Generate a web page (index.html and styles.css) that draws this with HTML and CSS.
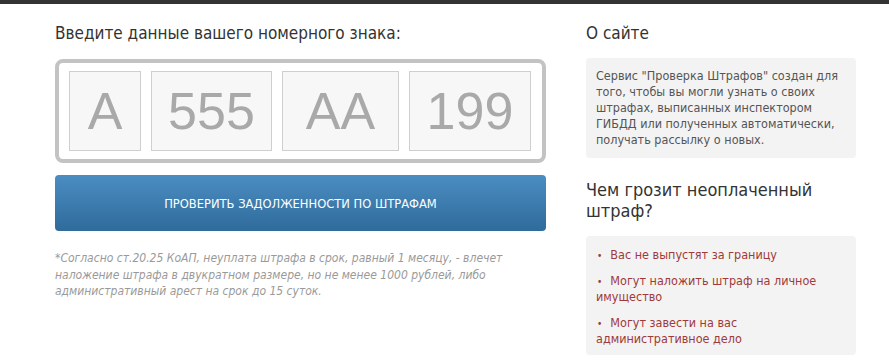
FILE: index.html
```html
<!DOCTYPE html>
<html lang="ru">
<head>
    <meta charset="UTF-8">
    <title>Проверка штрафов</title>
    <link rel="stylesheet" href="styles.css">
</head>
<body>
<div class="topbar"></div>
<div class="page">
    <div class="main">
        <h2 class="title">Введите данные вашего номерного знака:</h2>
        <div class="plate">
            <div class="cell c-letter">А</div>
            <div class="cell c-num">555</div>
            <div class="cell c-series">АА</div>
            <div class="cell c-region">199</div>
        </div>
        <button class="check">ПРОВЕРИТЬ ЗАДОЛЖЕННОСТИ ПО ШТРАФАМ</button>
        <p class="note">*Согласно ст.20.25 КоАП, неуплата штрафа в срок, равный 1 месяцу, - влечет наложение штрафа в двукратном размере, но не менее 1000 рублей, либо административный арест на срок до 15 суток.</p>
    </div>
    <div class="side">
        <h2 class="title">О сайте</h2>
        <div class="panel">
            Сервис "Проверка Штрафов" создан для того, чтобы вы могли узнать о своих штрафах, выписанных инспектором ГИБДД или полученных автоматически, получать рассылку о новых.
        </div>
        <h2 class="title title-big">Чем грозит неоплаченный штраф?</h2>
        <ul class="panel risks">
            <li>Вас не выпустят за границу</li>
            <li>Могут наложить штраф на личное имущество</li>
            <li>Могут завести на вас административное дело</li>
        </ul>
    </div>
</div>
</body>
</html>
```

FILE: styles.css
```css
* {
    margin: 0;
    padding: 0;
    box-sizing: border-box;
}

body {
    background: #fff;
    font-family: "DejaVu Sans Condensed", "DejaVu Sans", sans-serif;
    color: #333;
}

.topbar {
    height: 4px;
    background: #333;
}

.page {
    display: flex;
    gap: 40px;
    padding: 18px 0 0 55px;
}

.main {
    width: 491px;
}

.side {
    width: 270px;
}

.title {
    font-size: 17px;
    font-weight: normal;
    line-height: 22px;
    color: #333;
    margin-bottom: 15px;
}

.side .title {
    margin-bottom: 14px;
}

.side .title-big {
    font-size: 18px;
    line-height: 21px;
    margin-top: 21px;
    margin-bottom: 15px;
}

.plate {
    display: flex;
    gap: 10px;
    border: 4px solid #c3c3c3;
    border-radius: 8px;
    padding: 8px 10px;
}

.cell {
    height: 80px;
    background: #f7f7f7;
    border: 1px solid #cfcfcf;
    display: flex;
    align-items: center;
    justify-content: center;
    font-family: "Liberation Sans", Arial, sans-serif;
    font-size: 52px;
    color: #a9a9a9;
}

.c-letter { width: 72px; }
.c-num { width: 121px; }
.c-series { width: 117px; }
.c-region { width: 122px; }

.check {
    display: block;
    width: 491px;
    height: 56px;
    margin-top: 12px;
    border: none;
    border-radius: 4px;
    background: linear-gradient(#4b8dc2, #2f6b9b);
    color: #fff;
    font-family: "DejaVu Sans Condensed", "DejaVu Sans", sans-serif;
    font-size: 12.8px;
}

.note {
    margin-top: 19px;
    font-size: 12px;
    line-height: 16.5px;
    font-style: italic;
    color: #9a9a9a;
}

.panel {
    background: #f3f3f3;
    border-radius: 4px;
    padding: 10px 10px;
    font-size: 12.5px;
    line-height: 16px;
    color: #555;
}

.risks {
    list-style: none;
    padding: 11px 10px 8px;
    color: #a03a3a;
}

.risks li + li {
    margin-top: 10px;
}

.risks li::before {
    content: "•";
    font-size: 10px;
    line-height: 0;
    margin: 0 8px 0 1px;
}
```
